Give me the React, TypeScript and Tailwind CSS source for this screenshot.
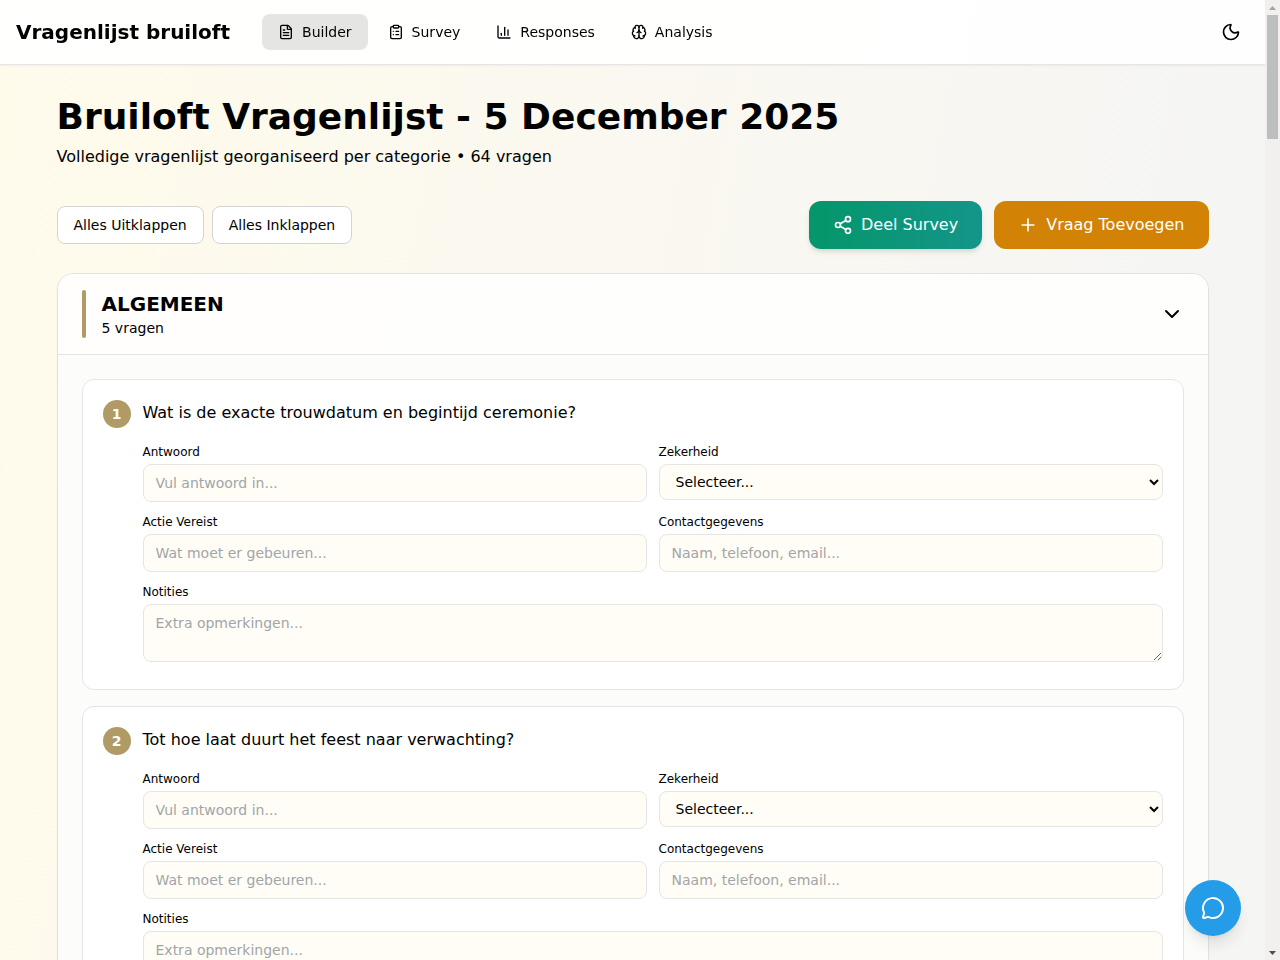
import { useEffect, useRef, useState } from "react";
import {
  Brain,
  ChartColumn,
  ChevronDown,
  ClipboardList,
  FileText,
  MessageCircle,
  Moon,
  Plus,
  Share2,
} from "lucide-react";

const tabs = [
  { name: "Builder", icon: FileText },
  { name: "Survey", icon: ClipboardList },
  { name: "Responses", icon: ChartColumn },
  { name: "Analysis", icon: Brain },
];

const categories = [
  {
    name: "ALGEMEEN",
    questions: [
      "Wat is de exacte trouwdatum en begintijd ceremonie?",
      "Tot hoe laat duurt het feest naar verwachting?",
      "Hoeveel daggasten worden er verwacht?",
      "Hoeveel avondgasten worden er verwacht?",
      "Wie is de ceremoniemeester?",
    ],
  },
  {
    name: "LOCATIE",
    questions: [
      "Waar vindt de ceremonie plaats?",
      "Waar vindt het feest plaats?",
      "Is er voldoende parkeergelegenheid?",
      "Vanaf hoe laat is de locatie open?",
    ],
  },
  {
    name: "CATERING",
    questions: [
      "Wie verzorgt het diner?",
      "Zijn er dieetwensen of allergieën?",
      "Hoe laat wordt het diner geserveerd?",
      "Wie levert de bruidstaart?",
    ],
  },
  {
    name: "MUZIEK",
    questions: [
      "Is er een band of DJ?",
      "Wat is het nummer voor de openingsdans?",
      "Tot hoe laat mag er muziek zijn?",
    ],
  },
  {
    name: "FOTOGRAFIE",
    questions: [
      "Wie is de fotograaf?",
      "Waar worden de foto's gemaakt?",
      "Komt er een videograaf?",
    ],
  },
];

const field =
  "block w-full rounded-lg border border-[#e5e5e5] bg-[#fffdf5] px-3 text-sm text-black placeholder:text-[#a1a5a9]";
const label = "mb-1 block text-xs text-black";

function QuestionCard({ id, number, text }: { id: string; number: number; text: string }) {
  return (
    <li className="flex items-start gap-3 rounded-xl border border-[#e5e5e5] bg-white p-5">
      <span className="flex size-7 shrink-0 items-center justify-center rounded-full bg-[#b09b66] text-sm font-bold text-white">
        {number}
      </span>
      <div className="min-w-0 flex-1">
        <h3 className="mb-[18px] text-base leading-[26px]">{text}</h3>
        <div className="grid grid-cols-1 items-start gap-3 md:grid-cols-2">
          <div>
            <label className={label} htmlFor={id + "-antwoord"}>Antwoord</label>
            <input id={id + "-antwoord"} className={field + " py-2"} placeholder="Vul antwoord in..." />
          </div>
          <div>
            <label className={label} htmlFor={id + "-zekerheid"}>Zekerheid</label>
            <select id={id + "-zekerheid"} className={field + " h-9"} defaultValue="">
              <option value="">Selecteer...</option>
              <option value="zeker">Zeker</option>
              <option value="onzeker">Onzeker</option>
            </select>
          </div>
          <div>
            <label className={label} htmlFor={id + "-actie"}>Actie Vereist</label>
            <input id={id + "-actie"} className={field + " py-2"} placeholder="Wat moet er gebeuren..." />
          </div>
          <div>
            <label className={label} htmlFor={id + "-contact"}>Contactgegevens</label>
            <input id={id + "-contact"} className={field + " py-2"} placeholder="Naam, telefoon, email..." />
          </div>
          <div className="pb-[7px] md:col-span-2">
            <label className={label} htmlFor={id + "-notities"}>Notities</label>
            <textarea id={id + "-notities"} rows={2} className={field + " py-2"} placeholder="Extra opmerkingen..." />
          </div>
        </div>
      </div>
    </li>
  );
}

export default function App() {
  const [active, setActive] = useState("Builder");
  const [closed, setClosed] = useState<string[]>([]);
  const [thumb, setThumb] = useState({ size: 13.4, before: 0 });
  const scroller = useRef<HTMLDivElement>(null);

  const toggle = (name: string) =>
    setClosed(closed.includes(name) ? closed.filter((n) => n !== name) : [...closed, name]);

  const measure = () => {
    const el = scroller.current;
    if (!el) return;
    setThumb({
      size: (100 * el.clientHeight) / el.scrollHeight,
      before: (100 * el.scrollTop) / el.scrollHeight,
    });
  };
  useEffect(measure, [closed]);

  const scrollBy = (top: number) => scroller.current?.scrollBy({ top });

  return (
    <div className="flex h-screen font-['DejaVu_Sans',sans-serif] text-black">
      <div className="relative min-w-0 flex-1">
        <div ref={scroller} onScroll={measure} className="h-full overflow-y-auto [scrollbar-width:none]">
          <div className="bg-linear-to-br from-[#fffbeb] via-[#f5f5f4] to-[#f5f5f4]">
            <header className="sticky top-0 z-10 flex h-[65px] items-center justify-between border-b border-[#e5e5e5] bg-white/90 px-4 shadow-xs">
              <div className="flex items-center gap-8">
                <span className="text-xl font-bold">Vragenlijst bruiloft</span>
                <nav className="flex gap-1">
                  {tabs.map(({ name, icon: Icon }) => (
                    <button
                      key={name}
                      onClick={() => setActive(name)}
                      className={
                        "flex h-9 items-center gap-2 rounded-lg px-4 text-sm " +
                        (active === name ? "bg-[#e5e5e4]" : "")
                      }
                    >
                      <Icon size={16} />
                      {name}
                    </button>
                  ))}
                </nav>
              </div>
              <button aria-label="Thema" className="flex size-9 items-center justify-center">
                <Moon size={20} />
              </button>
            </header>

            <main className="px-4 py-8">
              <div className="mx-auto max-w-6xl">
                <h1 className="mb-2 text-4xl font-bold">Bruiloft Vragenlijst - 5 December 2025</h1>
                <p className="mb-8 text-base">Volledige vragenlijst georganiseerd per categorie • 64 vragen</p>

                <div className="mb-6 flex flex-wrap items-center justify-between gap-3">
                  <div className="flex gap-2">
                    <button
                      onClick={() => setClosed([])}
                      className="rounded-lg border border-[#d4d4d4] bg-white px-4 py-2 text-sm"
                    >
                      Alles Uitklappen
                    </button>
                    <button
                      onClick={() => setClosed(categories.map((c) => c.name))}
                      className="rounded-lg border border-[#d4d4d4] bg-white px-4 py-2 text-sm"
                    >
                      Alles Inklappen
                    </button>
                  </div>
                  <div className="flex gap-3">
                    <button className="flex h-12 items-center gap-2 rounded-xl bg-linear-to-r from-[#059669] to-[#14958a] px-6 text-white shadow-md">
                      <Share2 size={20} />
                      Deel Survey
                    </button>
                    <button className="flex h-12 items-center gap-2 rounded-xl bg-[#d28205] px-6 text-white">
                      <Plus size={20} />
                      Vraag Toevoegen
                    </button>
                  </div>
                </div>

                <div className="flex flex-col gap-6">
                  {categories.map(({ name, questions }) => (
                    <section
                      key={name}
                      className="overflow-hidden rounded-2xl border border-[#e2e2e2] shadow-xs"
                    >
                      <button
                        onClick={() => toggle(name)}
                        className="flex w-full items-center justify-between bg-white/85 px-6 py-4 text-left"
                      >
                        <span className="flex items-center gap-4">
                          <span className="h-12 w-1 rounded-full bg-[#b09b66]" />
                          <span>
                            <span className="block text-xl font-bold">{name}</span>
                            <span className="block text-sm">{questions.length} vragen</span>
                          </span>
                        </span>
                        <ChevronDown size={24} />
                      </button>
                      {!closed.includes(name) && (
                        <ol className="flex flex-col gap-4 border-t border-[#e5e5e5] bg-[#fcfcfb] p-6">
                          {questions.map((text, i) => (
                            <QuestionCard key={text} id={name + i} number={i + 1} text={text} />
                          ))}
                        </ol>
                      )}
                    </section>
                  ))}
                </div>
              </div>
            </main>
          </div>
        </div>

        <button
          aria-label="Chat"
          className="absolute right-6 bottom-6 z-20 flex size-14 items-center justify-center rounded-full bg-[#259ce8] text-white shadow-lg"
        >
          <MessageCircle size={24} />
        </button>
      </div>

      <div className="flex w-[15px] shrink-0 flex-col bg-[#f1f0ef]">
        <button
          aria-label="Omhoog"
          onClick={() => scrollBy(-80)}
          className="flex h-[15px] items-center justify-center text-[#a3a3a3]"
        >
          <svg width="7" height="4" viewBox="0 0 7 4" fill="currentColor" aria-hidden="true">
            <path d="M0 4 3.5 0 7 4Z" />
          </svg>
        </button>
        <div className="flex min-h-0 flex-1 flex-col px-[2px]">
          <div className="shrink-0" style={{ height: thumb.before + "%" }} />
          <div className="shrink-0 bg-[#bdbfbe]" style={{ height: thumb.size + "%" }} />
        </div>
        <button
          aria-label="Omlaag"
          onClick={() => scrollBy(80)}
          className="flex h-[15px] items-center justify-center text-[#505050]"
        >
          <svg width="7" height="4" viewBox="0 0 7 4" fill="currentColor" aria-hidden="true">
            <path d="M0 0 3.5 4 7 0Z" />
          </svg>
        </button>
      </div>
    </div>
  );
}
